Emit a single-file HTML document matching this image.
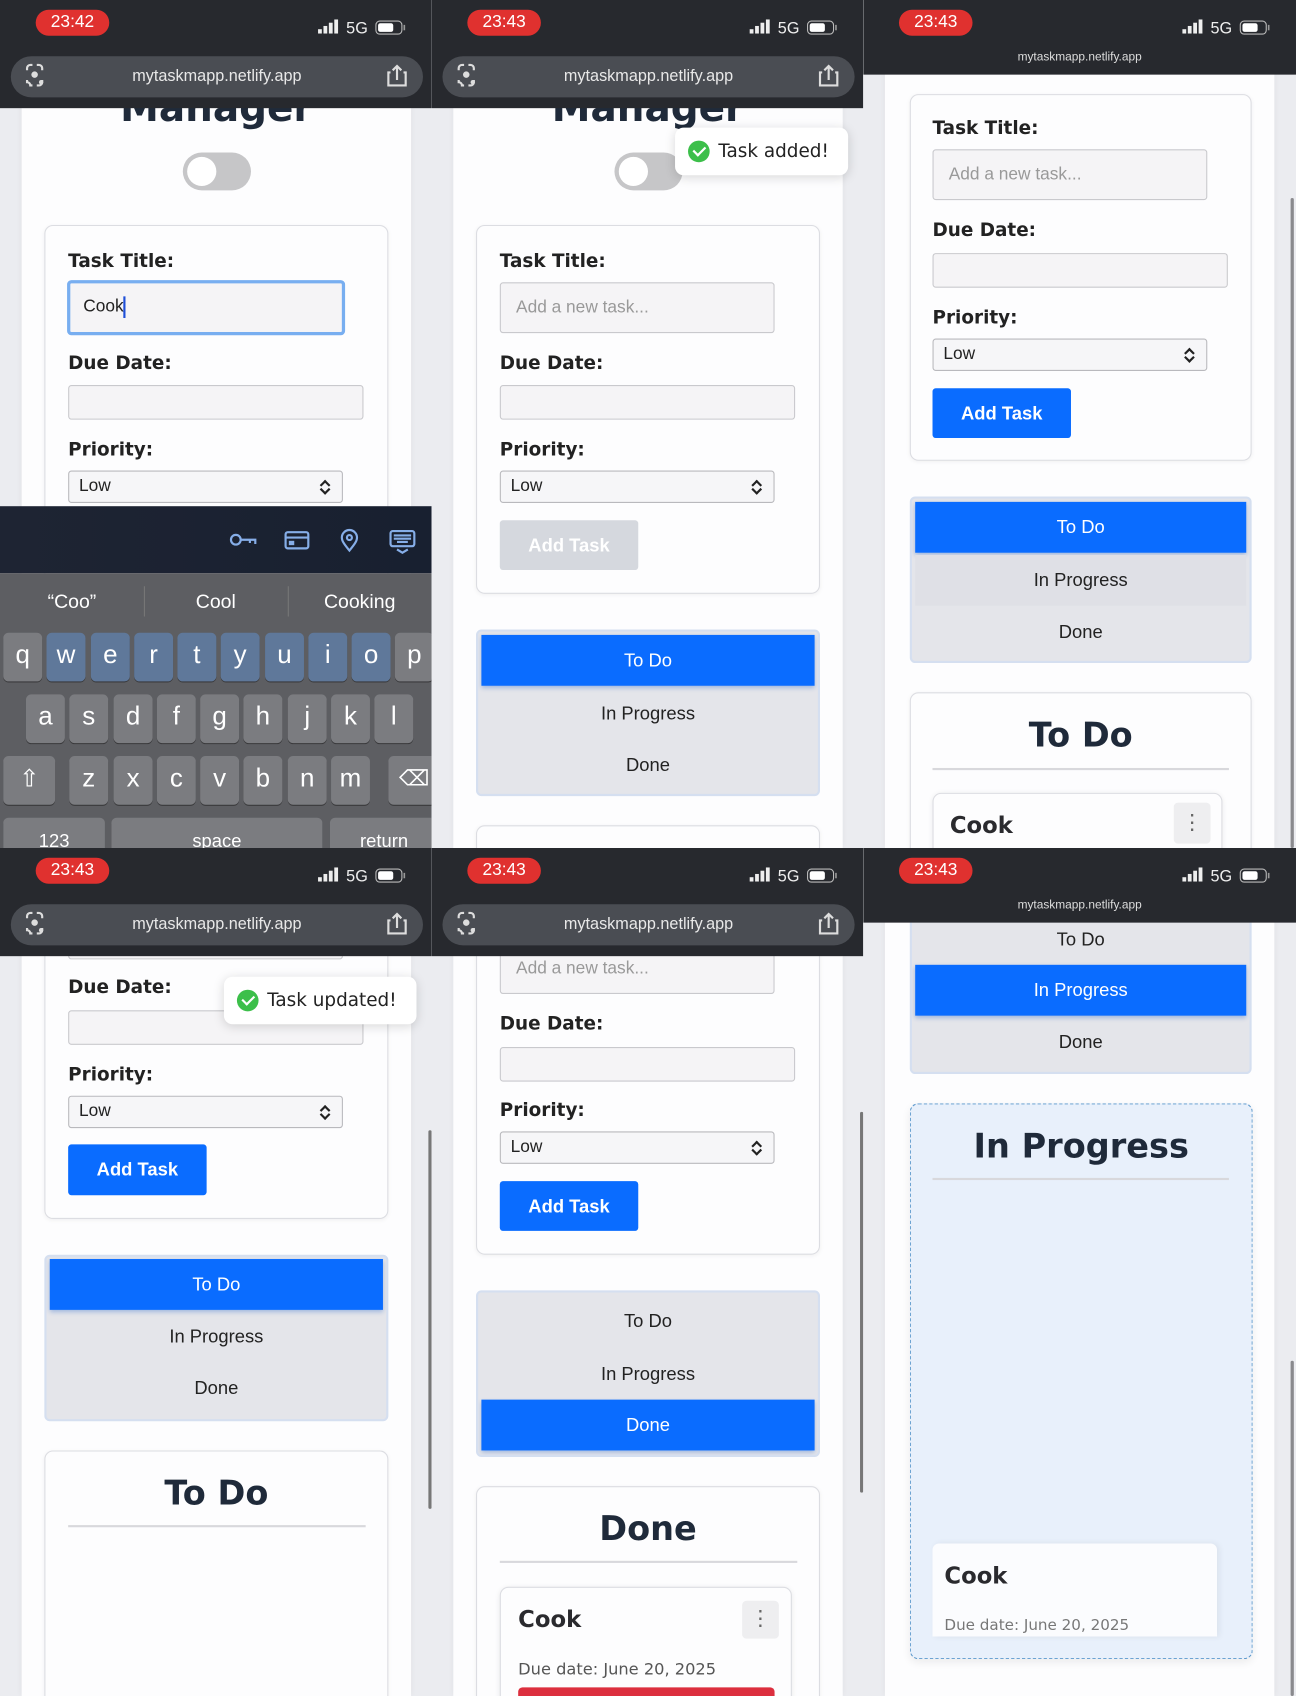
<!DOCTYPE html>
<html><head><meta charset="utf-8"><style>
*{box-sizing:border-box;margin:0;padding:0}
html,body{width:1296px;height:1696px;overflow:hidden;background:#ebecf0}
#w{position:absolute;left:0;top:0;width:1198px;height:1568px;transform:scale(1.08180,1.08163);transform-origin:0 0;font-family:"Liberation Sans",sans-serif}
.p{position:absolute;width:399px;height:784px;overflow:hidden;background:#ebecf0}
.a{position:absolute}
.cont{position:absolute;left:20px;width:360px;top:0;height:784px;background:#fdfdfe;box-shadow:0 0 6px rgba(0,0,0,.06)}
.hdr{position:absolute;left:0;top:0;width:399px;height:100px;background:#27292e}
.hdr.c{height:69px}
.time{position:absolute;left:33px;top:9px;width:68px;height:24px;border-radius:12px;background:#e0312f;color:#fff;font-size:16px;text-align:center;line-height:24px}
.g5{position:absolute;left:320px;top:18px;color:#eee;font-size:15px}
.url{position:absolute;left:10px;top:52px;width:381px;height:38px;border-radius:19px;background:#4a4d53;color:#e8e8e8;font-size:15px;text-align:center;line-height:38px}
.urlc{position:absolute;left:0;width:399px;top:47px;text-align:center;color:#ddd;font-size:11px}
.card{position:absolute;left:41px;width:318px;background:#fdfdfe;border:1px solid #dcdde2;border-radius:8px;box-shadow:0 1px 4px rgba(0,0,0,.05)}
.lbl{position:absolute;left:63px;font-family:"DejaVu Sans",sans-serif;font-weight:bold;font-size:17px;color:#222}
.inp{position:absolute;left:62px;width:255px;height:48px;background:#f5f4f6;border:1px solid #c9c9cd;border-radius:3px;color:#999;font-size:16px;line-height:46px;padding-left:14px}
.date{position:absolute;left:63px;width:273px;height:32px;background:#f5f4f6;border:1px solid #c9c9cd;border-radius:3px}
.sel{position:absolute;left:63px;width:254px;height:30px;background:#f6f6f8;border:1px solid #b9b9bd;border-radius:3px;font-size:16px;line-height:28px;padding-left:9px;color:#222}
.sel:after{content:"";position:absolute;right:12px;top:9px;width:5px;height:5px;border-left:2px solid #222;border-top:2px solid #222;transform:rotate(45deg)}
.sel:before{content:"";position:absolute;right:12px;top:13px;width:5px;height:5px;border-right:2px solid #222;border-bottom:2px solid #222;transform:rotate(45deg)}
.btn{position:absolute;left:63px;width:128px;height:47px;background:#0a6cff;color:#fff;font-weight:bold;font-size:17px;text-align:center;line-height:47px;border-radius:3px}
.tabs{position:absolute;left:41px;width:318px;height:154px;background:#e4e5ea;border:2px solid #d5dff0;border-radius:5px;overflow:hidden}
.tab{position:absolute;left:3px;width:308px;height:47px;text-align:center;line-height:47px;font-size:17px;color:#222}
.tab.on{background:#0a6cff;color:#fff;box-shadow:0 2px 4px rgba(0,80,200,.3)}
.h2{position:absolute;left:41px;width:318px;text-align:center;font-family:"DejaVu Sans",sans-serif;font-weight:bold;font-size:31px;color:#1f2a3a}
.hr{position:absolute;left:62px;width:275px;height:2px;background:#d8d8dc}
.tc{position:absolute;background:#fdfdfe;border:1px solid #dcdde2;border-radius:8px;box-shadow:0 1px 5px rgba(0,0,0,.08)}
.tt{position:absolute;font-family:"DejaVu Sans",sans-serif;font-weight:bold;font-size:21px;color:#2a2a2e}
.keb{position:absolute;width:34px;height:38px;background:#eeeef0;border-radius:4px;color:#666;text-align:center;line-height:38px;font-size:20px}
.toast{position:absolute;background:#fff;border-radius:8px;box-shadow:0 2px 10px rgba(0,0,0,.15);font-family:"DejaVu Sans",sans-serif;font-size:17px;color:#222;line-height:44px;padding-left:40px}
.ck{position:absolute;left:12px;top:12px;width:20px;height:20px;border-radius:50%;background:#3cbf4a}
.ck:after{content:"";position:absolute;left:7px;top:3px;width:5px;height:9px;border-right:2px solid #fff;border-bottom:2px solid #fff;transform:rotate(45deg)}
.man{position:absolute;left:20px;width:360px;text-align:center;font-family:"DejaVu Sans",sans-serif;font-weight:bold;font-size:36px;color:#1f2a3a}
.tog{position:absolute;left:169px;top:141px;width:63px;height:35px;border-radius:18px;background:#c6c6c8}
.tog:after{content:"";position:absolute;left:4px;top:4px;width:27px;height:27px;border-radius:50%;background:#fff}
.sb{position:absolute;width:3px;background:#777;border-radius:2px}
.k{position:absolute;width:36px;height:45px;border-radius:5px;background:#7b7c80;color:#fff;font-size:24px;text-align:center;line-height:42px;box-shadow:0 1px 0 #3a3a3c}
.k.b{background:#5f789a}
.st{position:absolute;left:0;top:0}
</style></head><body><div id="w">

<!-- PANEL 1 -->
<div class="p" style="left:0;top:0">
 <div class="cont"></div>
 <div class="man" style="top:80px">Manager</div>
 <div class="tog"></div>
 <div class="card" style="top:208px;height:360px"></div>
 <div class="lbl" style="top:232px">Task Title:</div>
 <div class="inp" style="top:259px;background:#f5f4f6;border:3px solid #78aef0;border-radius:4px;color:#222;line-height:44px;padding-left:12px;width:257px;height:51px">Cook<span style="display:inline-block;width:2px;height:20px;background:#1f4fd8;vertical-align:middle"></span></div>
 <div class="lbl" style="top:326px">Due Date:</div>
 <div class="date" style="top:356px"></div>
 <div class="lbl" style="top:406px">Priority:</div>
 <div class="sel" style="top:435px">Low</div>
 <div class="a" style="left:0;top:468px;width:399px;height:62px;background:linear-gradient(90deg,#1e2433,#182030)"></div>
 <svg class="a" style="left:0;top:468px" width="399" height="62" fill="none" stroke="#86aee8" stroke-width="2">
  <circle cx="218" cy="31" r="4.5"/><path d="M223 31h13v4M231 31v3"/>
  <rect x="264" y="24" width="21" height="15" rx="2"/><path d="M264 29h21"/><rect x="268" y="33" width="3" height="2" fill="#86aee8"/>
  <path d="M323 41c-5-6-7-9-7-12a7 7 0 0 1 14 0c0 3-2 6-7 12z"/><circle cx="323" cy="29" r="2.3"/>
  <rect x="361" y="23" width="22" height="14" rx="2"/><path d="M364 27h16M364 30h16M367 33h10M367 40l5 3 5-3"/>
 </svg>
 <div class="a" style="left:0;top:530px;width:399px;height:254px;background:#5d5e62"></div>
 <div class="a" style="left:0;top:546px;width:133px;text-align:center;color:#fff;font-size:18px">“Coo”</div>
 <div class="a" style="left:133px;top:546px;width:133px;text-align:center;color:#fff;font-size:18px">Cool</div>
 <div class="a" style="left:266px;top:546px;width:133px;text-align:center;color:#fff;font-size:18px">Cooking</div>
 <div class="a" style="left:133px;top:542px;width:1px;height:28px;background:#777"></div>
 <div class="a" style="left:266px;top:542px;width:1px;height:28px;background:#777"></div>
 <div class="k" style="left:3px;top:585px">q</div><div class="k b" style="left:43px;top:585px">w</div><div class="k b" style="left:84px;top:585px">e</div><div class="k b" style="left:124px;top:585px">r</div><div class="k b" style="left:164px;top:585px">t</div><div class="k b" style="left:204px;top:585px">y</div><div class="k b" style="left:245px;top:585px">u</div><div class="k b" style="left:285px;top:585px">i</div><div class="k b" style="left:325px;top:585px">o</div><div class="k" style="left:365px;top:585px">p</div>
 <div class="k" style="left:24px;top:642px">a</div><div class="k" style="left:64px;top:642px">s</div><div class="k" style="left:105px;top:642px">d</div><div class="k" style="left:145px;top:642px">f</div><div class="k" style="left:185px;top:642px">g</div><div class="k" style="left:225px;top:642px">h</div><div class="k" style="left:266px;top:642px">j</div><div class="k" style="left:306px;top:642px">k</div><div class="k" style="left:346px;top:642px">l</div>
 <div class="k" style="left:3px;top:699px;width:48px;font-size:22px">⇧</div>
 <div class="k" style="left:64px;top:699px">z</div><div class="k" style="left:105px;top:699px">x</div><div class="k" style="left:145px;top:699px">c</div><div class="k" style="left:185px;top:699px">v</div><div class="k" style="left:225px;top:699px">b</div><div class="k" style="left:266px;top:699px">n</div><div class="k" style="left:306px;top:699px">m</div>
 <div class="k" style="left:359px;top:699px;width:48px;font-size:20px">⌫</div>
 <div class="k" style="left:3px;top:756px;width:94px;font-size:17px;line-height:44px">123</div>
 <div class="k" style="left:103px;top:756px;width:195px;font-size:17px;line-height:44px">space</div>
 <div class="k" style="left:305px;top:756px;width:100px;font-size:17px;line-height:44px">return</div>
 <div class="hdr"><div class="time">23:42</div><div class="url">mytaskmapp.netlify.app</div>
 <svg class="st" width="399" height="100"><g fill="#eee"><rect x="294" y="27" width="3.5" height="4"/><rect x="299" y="24" width="3.5" height="7"/><rect x="304" y="21" width="3.5" height="10"/><rect x="309" y="18" width="3.5" height="13"/></g><text x="320" y="31" fill="#eee" font-family="Liberation Sans" font-size="15">5G</text><rect x="347.5" y="19.5" width="24" height="12" rx="3.5" fill="none" stroke="#bbb"/><rect x="349.5" y="21.5" width="14" height="8" rx="2" fill="#fff"/><rect x="373" y="23" width="1.5" height="5" fill="#999"/><g fill="none" stroke="#ddd" stroke-width="2"><path d="M25 65v-2a3 3 0 0 1 3-3h2M34 60h2a3 3 0 0 1 3 3v2M39 74v2a3 3 0 0 1-3 3h-2M25 74v2a3 3 0 0 1 3 3h2"/><path d="M361 67h-2v12h16V67h-2M367 74V61M363 65l4-4 4 4"/></g><circle cx="32" cy="69" r="3" fill="#ddd"/><circle cx="38" cy="76" r="2" fill="#ddd"/></svg></div>
</div>

<!-- PANEL 2 -->
<div class="p" style="left:399px;top:0">
 <div class="cont"></div>
 <div class="man" style="top:80px">Manager</div>
 <div class="tog"></div>
 <div class="card" style="top:208px;height:341px"></div>
 <div class="lbl" style="top:232px">Task Title:</div>
 <div class="inp" style="top:261px;left:63px;width:254px;height:47px">Add a new task...</div>
 <div class="lbl" style="top:326px">Due Date:</div>
 <div class="date" style="top:356px"></div>
 <div class="lbl" style="top:406px">Priority:</div>
 <div class="sel" style="top:435px">Low</div>
 <div class="btn" style="top:481px;background:#d5d8de;height:46px">Add Task</div>
 <div class="tabs" style="top:582px"><div class="tab on" style="top:3px">To Do</div><div class="tab" style="top:52px">In Progress</div><div class="tab" style="top:100px">Done</div></div>
 <div class="card" style="top:763px;height:60px"></div>
 <div class="toast" style="left:225px;top:118px;width:160px;height:44px"><div class="ck"></div>Task added!</div>
 <div class="hdr"><div class="time">23:43</div><div class="url">mytaskmapp.netlify.app</div>
 <svg class="st" width="399" height="100"><g fill="#eee"><rect x="294" y="27" width="3.5" height="4"/><rect x="299" y="24" width="3.5" height="7"/><rect x="304" y="21" width="3.5" height="10"/><rect x="309" y="18" width="3.5" height="13"/></g><text x="320" y="31" fill="#eee" font-family="Liberation Sans" font-size="15">5G</text><rect x="347.5" y="19.5" width="24" height="12" rx="3.5" fill="none" stroke="#bbb"/><rect x="349.5" y="21.5" width="14" height="8" rx="2" fill="#fff"/><rect x="373" y="23" width="1.5" height="5" fill="#999"/><g fill="none" stroke="#ddd" stroke-width="2"><path d="M25 65v-2a3 3 0 0 1 3-3h2M34 60h2a3 3 0 0 1 3 3v2M39 74v2a3 3 0 0 1-3 3h-2M25 74v2a3 3 0 0 1 3 3h2"/><path d="M361 67h-2v12h16V67h-2M367 74V61M363 65l4-4 4 4"/></g><circle cx="32" cy="69" r="3" fill="#ddd"/><circle cx="38" cy="76" r="2" fill="#ddd"/></svg></div>
</div>

<!-- PANEL 3 -->
<div class="p" style="left:798px;top:0;width:400px">
 <div class="cont"></div>
 <div class="card" style="top:87px;height:339px;left:43px;width:316px"></div>
 <div class="lbl" style="top:109px;left:64px">Task Title:</div>
 <div class="inp" style="top:138px;left:64px;width:254px;height:47px">Add a new task...</div>
 <div class="lbl" style="top:203px;left:64px">Due Date:</div>
 <div class="date" style="top:234px;left:64px"></div>
 <div class="lbl" style="top:284px;left:64px">Priority:</div>
 <div class="sel" style="top:313px;left:64px">Low</div>
 <div class="btn" style="top:359px;left:64px;height:46px">Add Task</div>
 <div class="tabs" style="top:459px;left:43px;width:316px"><div class="tab on" style="top:3px;width:306px">To Do</div><div class="tab" style="top:52px;width:306px;background:#dfe0e6">In Progress</div><div class="tab" style="top:100px;width:306px">Done</div></div>
 <div class="card" style="top:640px;height:200px;left:43px;width:316px"></div>
 <div class="h2" style="top:662px;left:43px;width:316px">To Do</div>
 <div class="hr" style="top:710px;left:64px;width:274px"></div>
 <div class="tc" style="left:64px;top:733px;width:268px;height:90px"></div>
 <div class="tt" style="left:80px;top:751px">Cook</div>
 <div class="keb" style="left:287px;top:742px">⋮</div>
 <div class="sb" style="left:395px;top:183px;height:601px;background:#8a8a8e"></div>
 <div class="hdr c" style="width:400px"><div class="time">23:43</div><div class="urlc" style="width:400px">mytaskmapp.netlify.app</div>
 <svg class="st" width="400" height="69"><g fill="#eee"><rect x="295" y="27" width="3.5" height="4"/><rect x="300" y="24" width="3.5" height="7"/><rect x="305" y="21" width="3.5" height="10"/><rect x="310" y="18" width="3.5" height="13"/></g><text x="321" y="31" fill="#eee" font-family="Liberation Sans" font-size="15">5G</text><rect x="348.5" y="19.5" width="24" height="12" rx="3.5" fill="none" stroke="#bbb"/><rect x="350.5" y="21.5" width="14" height="8" rx="2" fill="#fff"/><rect x="374" y="23" width="1.5" height="5" fill="#999"/></svg></div>
</div>

<!-- PANEL 4 -->
<div class="p" style="left:0;top:784px">
 <div class="cont"></div>
 <div class="card" style="top:-20px;height:363px"></div>
 <div class="inp" style="top:60px;left:63px;width:254px;height:43px"></div>
 <div class="lbl" style="top:119px">Due Date:</div>
 <div class="date" style="top:150px"></div>
 <div class="lbl" style="top:200px">Priority:</div>
 <div class="sel" style="top:229px">Low</div>
 <div class="btn" style="top:274px">Add Task</div>
 <div class="tabs" style="top:376px"><div class="tab on" style="top:2px">To Do</div><div class="tab" style="top:50px">In Progress</div><div class="tab" style="top:98px">Done</div></div>
 <div class="card" style="top:557px;height:260px"></div>
 <div class="h2" style="top:579px">To Do</div>
 <div class="hr" style="top:626px;left:63px;width:275px"></div>
 <div class="toast" style="left:207px;top:119px;width:178px;height:44px"><div class="ck"></div>Task updated!</div>
 <div class="sb" style="left:396px;top:261px;height:350px"></div>
 <div class="hdr"><div class="time">23:43</div><div class="url">mytaskmapp.netlify.app</div>
 <svg class="st" width="399" height="100"><g fill="#eee"><rect x="294" y="27" width="3.5" height="4"/><rect x="299" y="24" width="3.5" height="7"/><rect x="304" y="21" width="3.5" height="10"/><rect x="309" y="18" width="3.5" height="13"/></g><text x="320" y="31" fill="#eee" font-family="Liberation Sans" font-size="15">5G</text><rect x="347.5" y="19.5" width="24" height="12" rx="3.5" fill="none" stroke="#bbb"/><rect x="349.5" y="21.5" width="14" height="8" rx="2" fill="#fff"/><rect x="373" y="23" width="1.5" height="5" fill="#999"/><g fill="none" stroke="#ddd" stroke-width="2"><path d="M25 65v-2a3 3 0 0 1 3-3h2M34 60h2a3 3 0 0 1 3 3v2M39 74v2a3 3 0 0 1-3 3h-2M25 74v2a3 3 0 0 1 3 3h2"/><path d="M361 67h-2v12h16V67h-2M367 74V61M363 65l4-4 4 4"/></g><circle cx="32" cy="69" r="3" fill="#ddd"/><circle cx="38" cy="76" r="2" fill="#ddd"/></svg></div>
</div>

<!-- PANEL 5 -->
<div class="p" style="left:399px;top:784px">
 <div class="cont"></div>
 <div class="card" style="top:-20px;height:396px"></div>
 <div class="inp" style="top:87px;left:63px;width:254px;height:48px;line-height:48px">Add a new task...</div>
 <div class="lbl" style="top:153px">Due Date:</div>
 <div class="date" style="top:184px"></div>
 <div class="lbl" style="top:233px">Priority:</div>
 <div class="sel" style="top:262px">Low</div>
 <div class="btn" style="top:308px;height:46px">Add Task</div>
 <div class="tabs" style="top:409px"><div class="tab" style="top:3px">To Do</div><div class="tab" style="top:52px">In Progress</div><div class="tab on" style="top:99px">Done</div></div>
 <div class="card" style="top:590px;height:230px"></div>
 <div class="h2" style="top:612px">Done</div>
 <div class="hr" style="top:659px;left:63px;width:275px"></div>
 <div class="tc" style="left:63px;top:683px;width:270px;height:140px"></div>
 <div class="tt" style="left:80px;top:701px">Cook</div>
 <div class="keb" style="left:287px;top:696px;height:35px;line-height:35px">⋮</div>
 <div class="a" style="left:80px;top:750px;font-family:'DejaVu Sans',sans-serif;font-size:15px;color:#555">Due date: June 20, 2025</div>
 <div class="a" style="left:80px;top:776px;width:237px;height:20px;background:#dc2f3e;border-radius:4px"></div>
 <div class="sb" style="left:396px;top:244px;height:352px"></div>
 <div class="hdr"><div class="time">23:43</div><div class="url">mytaskmapp.netlify.app</div>
 <svg class="st" width="399" height="100"><g fill="#eee"><rect x="294" y="27" width="3.5" height="4"/><rect x="299" y="24" width="3.5" height="7"/><rect x="304" y="21" width="3.5" height="10"/><rect x="309" y="18" width="3.5" height="13"/></g><text x="320" y="31" fill="#eee" font-family="Liberation Sans" font-size="15">5G</text><rect x="347.5" y="19.5" width="24" height="12" rx="3.5" fill="none" stroke="#bbb"/><rect x="349.5" y="21.5" width="14" height="8" rx="2" fill="#fff"/><rect x="373" y="23" width="1.5" height="5" fill="#999"/><g fill="none" stroke="#ddd" stroke-width="2"><path d="M25 65v-2a3 3 0 0 1 3-3h2M34 60h2a3 3 0 0 1 3 3v2M39 74v2a3 3 0 0 1-3 3h-2M25 74v2a3 3 0 0 1 3 3h2"/><path d="M361 67h-2v12h16V67h-2M367 74V61M363 65l4-4 4 4"/></g><circle cx="32" cy="69" r="3" fill="#ddd"/><circle cx="38" cy="76" r="2" fill="#ddd"/></svg></div>
</div>

<!-- PANEL 6 -->
<div class="p" style="left:798px;top:784px;width:400px">
 <div class="cont"></div>
 <div class="tabs" style="top:30px;left:43px;width:316px;height:179px"><div class="tab" style="top:29px;width:306px">To Do</div><div class="tab on" style="top:76px;width:306px">In Progress</div><div class="tab" style="top:124px;width:306px">Done</div></div>
 <div class="a" style="left:43px;top:236px;width:317px;height:514px;background:#e8f0fb;border:1.5px dashed #5b98cc;border-radius:8px;box-shadow:0 3px 8px rgba(0,0,0,.07)"></div>
 <div class="h2" style="top:258px;left:43px;width:317px">In Progress</div>
 <div class="hr" style="top:305px;left:64px;width:274px"></div>
 <div class="a" style="left:64px;top:643px;width:263px;height:86px;background:#fbfcfe;border-radius:6px 6px 0 0;box-shadow:2px 0 6px rgba(0,0,0,.06)"></div>
 <div class="tt" style="left:75px;top:661px">Cook</div>
 <div class="a" style="left:75px;top:711px;font-family:'DejaVu Sans',sans-serif;font-size:14px;color:#777">Due date: June 20, 2025</div>
 <div class="sb" style="left:395px;top:474px;height:310px;background:#8a8a8e"></div>
 <div class="hdr c" style="width:400px"><div class="time">23:43</div><div class="urlc" style="width:400px">mytaskmapp.netlify.app</div>
 <svg class="st" width="400" height="69"><g fill="#eee"><rect x="295" y="27" width="3.5" height="4"/><rect x="300" y="24" width="3.5" height="7"/><rect x="305" y="21" width="3.5" height="10"/><rect x="310" y="18" width="3.5" height="13"/></g><text x="321" y="31" fill="#eee" font-family="Liberation Sans" font-size="15">5G</text><rect x="348.5" y="19.5" width="24" height="12" rx="3.5" fill="none" stroke="#bbb"/><rect x="350.5" y="21.5" width="14" height="8" rx="2" fill="#fff"/><rect x="374" y="23" width="1.5" height="5" fill="#999"/></svg></div>
</div>

</div>
</body></html>
